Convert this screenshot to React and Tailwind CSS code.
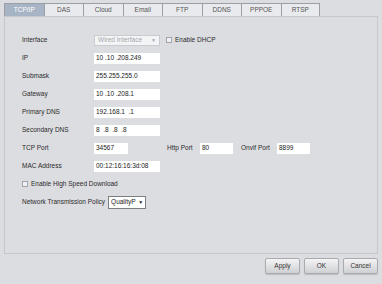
import React from 'react';

const tabs = ["TCP/IP", "DAS", "Cloud", "Email", "FTP", "DDNS", "PPPOE", "RTSP"];

const fields = [
    { label: "IP", value: "10 .10 .208.249" },
    { label: "Submask", value: "255.255.255.0" },
    { label: "Gateway", value: "10 .10 .208.1" },
    { label: "Primary DNS", value: "192.168.1  .1" },
    { label: "Secondary DNS", value: "8  .8  .8  .8" },
];

const TextBox = ({ value, width = "w-[66px]" }) => (
    <div className={`${width} h-[11px] bg-white pl-[2px] flex items-center text-[#222] whitespace-pre`}>
        {value}
    </div>
);

const CheckBox = () => (
    <div className="w-[6px] h-[6px] border border-[#a3a5aa] bg-[#eef0f3]"></div>
);

const Row = ({ children }) => (
    <div className="h-[18px] flex items-center">{children}</div>
);

const Label = ({ children }) => (
    <div className="w-[72px] text-[#2b2b2b]">{children}</div>
);

const Button = ({ children }) => (
    <button className="w-[35px] h-[16px] rounded-[2px] border border-[#a9abb0] bg-gradient-to-b from-[#f4f4f5] to-[#cfd0d3] text-[#333] text-[6.5px] shadow-[0_1px_1px_rgba(0,0,0,0.15)]">
        {children}
    </button>
);

export default function App() {
    return (
        <div className="w-[382px] h-[284px] bg-[#dcdde1] pt-[3px] px-[4px] text-[6.5px] leading-none overflow-hidden" style={{ fontFamily: '"Liberation Sans", Arial, sans-serif' }}>
            {/* tab strip */}
            <div className="flex h-[13px]">
                {tabs.map((t, i) => (
                    <div
                        key={t}
                        className={`w-[39.5px] flex items-center justify-center border-t border-l border-[#9b9fa6] ${i === tabs.length - 1 ? 'border-r' : ''} ${i === 0 ? 'bg-[#a7b4c6] text-white' : 'bg-[#e9eaed] text-[#555]'}`}
                    >
                        {t}
                    </div>
                ))}
            </div>

            {/* settings panel */}
            <div className="h-[238px] border border-[#c5c7cc] pl-[17px] pt-[14px]">
                <Row>
                    <Label>Interface</Label>
                    <div className="w-[66px] h-[11px] border border-[#c9cbd0] bg-[#f3f4f6] pl-[3px] pr-[3px] flex items-center justify-between text-[#a5a7ab]">
                        <span>Wired Interface</span>
                        <span className="text-[5px]">▼</span>
                    </div>
                    <div className="ml-[6px] flex items-center gap-[3px]">
                        <CheckBox />
                        <span className="text-[#2b2b2b]">Enable DHCP</span>
                    </div>
                </Row>

                {fields.map(f => (
                    <Row key={f.label}>
                        <Label>{f.label}</Label>
                        <TextBox value={f.value} />
                    </Row>
                ))}

                <Row>
                    <Label>TCP Port</Label>
                    <TextBox value="34567" width="w-[34px]" />
                    <div className="ml-[39px] w-[33px] text-[#2b2b2b]">Http Port</div>
                    <TextBox value="80" width="w-[33px]" />
                    <div className="ml-[8px] w-[36px] text-[#2b2b2b]">Onvif Port</div>
                    <TextBox value="8899" width="w-[33px]" />
                </Row>

                <Row>
                    <Label>MAC Address</Label>
                    <TextBox value="00:12:16:16:3d:08" />
                </Row>

                <Row>
                    <div className="flex items-center gap-[3px]">
                        <CheckBox />
                        <span className="text-[#2b2b2b]">Enable High Speed Download</span>
                    </div>
                </Row>

                <Row>
                    <span className="text-[#2b2b2b] mr-[3px]">Network Transmission Policy</span>
                    <div className="h-[13px] w-[38px] border border-[#7b7d82] bg-white flex items-center justify-between pl-[2px] pr-[2px] text-[#222]">
                        <span>QualityP</span>
                        <span className="text-[5px]">▼</span>
                    </div>
                </Row>
            </div>

            {/* action buttons */}
            <div className="mt-[4px] flex justify-end gap-[4px]">
                <Button>Apply</Button>
                <Button>OK</Button>
                <Button>Cancel</Button>
            </div>
        </div>
    );
}
